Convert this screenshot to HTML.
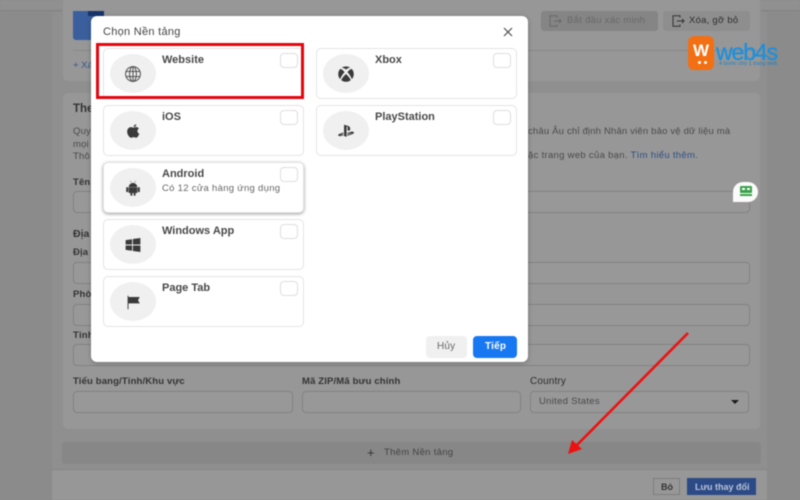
<!DOCTYPE html>
<html lang="vi"><head><meta charset="utf-8"><title>Chọn Nền tảng</title>
<style>
html,body{margin:0;padding:0;width:800px;height:500px;overflow:hidden;background:#8b8b8b}
body{font-family:"Liberation Sans",Arial,sans-serif;position:relative}
#wrap{position:absolute;left:0;top:0;width:800px;height:500px;filter:blur(.45px)}
.a{position:absolute;box-sizing:border-box}
.t{position:absolute;white-space:nowrap;line-height:14px}
.card{background:#979797;border:1px solid #8f8f8f;border-radius:6px}
.in{background:#989898;border:1px solid #828282;border-radius:4px;height:22px}
.lb{font-weight:bold;font-size:9.5px;color:#333;letter-spacing:.15px}
.p{font-size:9.5px;color:#4a4a4a;letter-spacing:.18px}
.m{background:#fff;border:1px solid #e4e4e4;border-radius:5px;width:201px;height:51px}
.c{position:absolute;left:6px;top:5px;width:46px;height:39px;border-radius:50%;background:#f0f0f0}
.c svg{position:absolute;left:14px;top:10.5px;width:18px;height:18px}
.n{position:absolute;left:58px;top:3.5px;font-weight:bold;font-size:11px;color:#484848;line-height:14px;white-space:nowrap}
.s{position:absolute;left:58px;top:18.5px;font-size:9.5px;color:#666;letter-spacing:.3px;line-height:14px;white-space:nowrap}
.k{position:absolute;left:176px;top:4px;width:18px;height:15px;border:1px solid #dedede;border-radius:4px;box-sizing:border-box}
</style></head><body><div id="wrap">
<div class="a" style="left:0;top:0;width:800px;height:11px;background:#909090;border-bottom:1px solid #838383"></div>
<div class="a" style="left:52px;top:12px;width:715px;height:458px;background:#8f8f8f"></div>
<div class="a" style="left:52px;top:469px;width:715px;height:31px;background:#979797;border-top:1px solid #858585"></div>

<div class="a card" style="left:62px;top:-10px;width:699px;height:92px"></div>
<div class="a" style="left:73px;top:11px;width:30px;height:29px;background:#3a5f9c;border-radius:0 0 0 3px"></div>
<div class="a" style="left:88px;top:11px;width:16px;height:5px;background:#17336a"></div>
<div class="a" style="left:73px;top:50px;width:688px;height:1px;background:#878787"></div>
<div class="t" style="left:73px;top:59px;font-size:9.5px;color:#34558f">+ Xá</div>
<div class="a" style="left:541px;top:11px;width:117px;height:20px;background:#858585;border-radius:3px"></div>
<div class="t" style="left:567px;top:13.500px;font-size:9.5px;color:#686868;letter-spacing:.3px">Bắt đầu xác minh</div>
<svg class="a" style="left:549px;top:15px" width="13" height="12" viewBox="0 0 13 12" fill="none" stroke="#686868"><path d="M8 2.500V.7H1V11.300H8V9.500M5 6H12M10 4L12 6L10 8"/></svg>
<div class="a" style="left:663px;top:11px;width:87px;height:20px;background:#8e8e8e;border-radius:3px"></div>
<div class="t" style="left:689px;top:13.500px;font-size:9.5px;color:#2e2e2e;letter-spacing:.25px">Xóa, gỡ bỏ</div>
<svg class="a" style="left:672px;top:15px" width="13" height="12" viewBox="0 0 13 12" fill="none" stroke="#333"><path d="M8 2.500V.7H1V11.300H8V9.500M5 6H12M10 4L12 6L10 8"/></svg>

<div class="a card" style="left:62px;top:92px;width:699px;height:338px"></div>
<div class="t" style="left:73px;top:102px;font-size:11.5px;font-weight:bold;color:#333">The</div>
<div class="t p" style="left:73px;top:125px">Quy</div>
<div class="t p" style="left:73px;top:138px">mọi</div>
<div class="t p" style="left:73px;top:150px">Thô</div>
<div class="t p" style="left:528px;top:125px">châu Âu chỉ định Nhân viên bảo vệ dữ liệu mà</div>
<div class="t p" style="left:528px;top:149px;letter-spacing:.3px">ặc trang web của bạn. <span style="color:#2d5187">Tìm hiểu thêm.</span></div>
<div class="t lb" style="left:73px;top:176px">Tên</div>
<div class="a in" style="left:73px;top:191px;width:677px"></div>
<div class="t" style="left:73px;top:227px;font-size:10.5px;font-weight:bold;color:#333">Địa</div>
<div class="t lb" style="left:73px;top:246px">Địa</div>
<div class="a in" style="left:73px;top:262px;width:677px"></div>
<div class="t lb" style="left:73px;top:288px">Phò</div>
<div class="a in" style="left:73px;top:304px;width:677px"></div>
<div class="t lb" style="left:73px;top:329px">Tỉnh</div>
<div class="a in" style="left:73px;top:344px;width:677px"></div>
<div class="t lb" style="left:73px;top:375px">Tiểu bang/Tỉnh/Khu vực</div>
<div class="a in" style="left:73px;top:391px;width:220px"></div>
<div class="t lb" style="left:302px;top:375px">Mã ZIP/Mã bưu chính</div>
<div class="a in" style="left:302px;top:391px;width:219px"></div>
<div class="t lb" style="left:530px;top:375px;font-weight:normal;color:#2c2c2c;font-size:10px">Country</div>
<div class="a in" style="left:530px;top:391px;width:219px"></div>
<div class="t p" style="left:539px;top:395px;color:#484848;letter-spacing:.3px">United States</div>
<div class="a" style="left:731px;top:400px;width:0;height:0;border:4px solid transparent;border-top:4px solid #1c1c1c"></div>

<div class="a" style="left:62px;top:442px;width:699px;height:22px;background:#878787;border-radius:3px"></div>
<div class="t" style="left:367px;top:446px;font-size:13px;color:#333">+</div>
<div class="t" style="left:384px;top:445.500px;font-size:9.5px;color:#444;letter-spacing:.3px">Thêm Nền tảng</div>

<div class="a" style="left:653px;top:478px;width:27px;height:17px;border:1px solid #7e7e7e;background:#979797"></div>
<div class="t" style="left:661px;top:479.500px;font-size:9px;font-weight:bold;color:#333">Bỏ</div>
<div class="a" style="left:687px;top:478px;width:69px;height:17px;background:#2b4a86"></div>
<div class="t" style="left:695px;top:479.500px;font-size:9px;font-weight:bold;color:#b9c3d6">Lưu thay đổi</div>

<!-- logo -->
<div class="a" style="left:688px;top:36px;width:26px;height:34px;background:#f26f13;border-radius:6px"></div>
<div class="t" style="left:693px;top:42px;font-size:17px;font-weight:bold;color:#fff;line-height:17px">W</div>
<div class="a" style="left:698px;top:61px;width:3px;height:3px;border-radius:50%;background:#fff"></div>
<div class="a" style="left:704px;top:61px;width:3px;height:3px;border-radius:50%;background:#fff"></div>
<div class="t" style="left:716px;top:40px;font-size:23px;color:#1b90de;letter-spacing:-1.1px;line-height:24px;-webkit-text-stroke:.3px #1b90de">web4s</div>
<div class="t" style="left:719px;top:59.500px;font-size:5.500px;color:#1f7fc0;line-height:8px">4 bước cho 1 trang web</div>

<!-- chat bubble -->
<div class="a" style="left:733px;top:182px;width:25px;height:20px;background:#fafafa;border-radius:10px 10px 10px 0"></div>
<div class="a" style="left:740px;top:186px;width:12px;height:7px;background:#3aa14a;border-radius:1px"></div>
<div class="a" style="left:742px;top:188px;width:3px;height:2px;background:#fff"></div>
<div class="a" style="left:747px;top:188px;width:3px;height:2px;background:#fff"></div>
<div class="a" style="left:740px;top:194px;width:12px;height:2px;background:#3aa14a"></div>

<!-- arrow -->
<svg class="a" style="left:560px;top:325px" width="135" height="135" viewBox="0 0 135 135"><path d="M128 8L14 123" stroke="#ee1111" stroke-width="2.600" fill="none"/><path d="M8 129L12 115L22 124Z" fill="#ee1111"/></svg>

<!-- modal -->
<div class="a" style="left:91px;top:16px;width:437px;height:346px;background:#fff;border-radius:6px;box-shadow:0 1px 5px rgba(0,0,0,.25)"></div>
<div class="t" style="left:103px;top:25px;font-size:11px;color:#444;letter-spacing:.28px">Chọn Nền tảng</div>
<svg class="a" style="left:503px;top:27px" width="10" height="10" viewBox="0 0 10 10"><path d="M1 1L9 9M9 1L1 9" stroke="#444" stroke-width="1.1"/></svg>

<div class="a m" style="left:103px;top:48px"><div class="c"><svg viewBox="0 0 20 20" fill="none" stroke="#555" stroke-width="1.2"><circle cx="10" cy="10" r="8.2"/><ellipse cx="10" cy="10" rx="3.8" ry="8.2"/><path d="M10 2V18M2.200 7.200H17.800M2.200 12.800H17.800"/></svg></div><div class="n">Website</div><div class="k"></div></div>

<div class="a m" style="left:103px;top:105px"><div class="c"><svg viewBox="0 0 20 20" fill="#3a3a3a"><path d="M13.600 2.600c.1 1.500-1.300 3-2.900 2.900-.1-1.500 1.400-3 2.900-2.900zM10.600 6.300c.7 0 1.500-.7 2.800-.7 1.200 0 2.400.6 3.100 1.700-2.400 1.400-2 4.800.5 5.800-.6 1.700-2 4.400-3.500 4.400-1 0-1.400-.7-2.700-.7s-1.800.7-2.700.7C6.100 17.500 3.500 13.900 3.500 10.700c0-3 1.900-5 4.200-5 1.200 0 2.100.6 2.900.6z"/></svg></div><div class="n">iOS</div><div class="k"></div></div>

<div class="a m" style="left:103px;top:162px;box-shadow:0 1px 3px rgba(0,0,0,.4)"><div class="c"><svg viewBox="0 0 20 20" fill="#3a3a3a"><path d="M5.500 8.200A4.600 4.600 0 0 1 14.500 8.200V8.600H5.500ZM5.500 9.400H14.500V15.400H12.600V18.300H11V15.400H9V18.300H7.400V15.400H5.500ZM2.700 9.400H4.500V14.300H2.700ZM15.500 9.400H17.300V14.300H15.500ZM7 2L8 3.800M13 2L12 3.800" stroke="#3a3a3a" stroke-width=".5"/></svg></div><div class="n">Android</div><div class="s">Có 12 cửa hàng ứng dụng</div><div class="k"></div></div>

<div class="a m" style="left:103px;top:219px"><div class="c"><svg viewBox="0 0 20 20" fill="#3a3a3a"><path d="M1.800 4.600L8.900 3.600V9.500H1.800ZM9.900 3.400L18.200 2.200V9.500H9.900ZM1.800 10.500H8.900V16.400L1.800 15.400ZM9.900 10.500H18.200V17.800L9.900 16.600Z"/></svg></div><div class="n">Windows App</div><div class="k"></div></div>

<div class="a m" style="left:103px;top:276px"><div class="c"><svg viewBox="0 0 20 20" fill="#3a3a3a"><path d="M4 3H5V18H4Z"/><path d="M5 4.500H17.500L15.600 8L17.500 11.500H5Z"/></svg></div><div class="n">Page Tab</div><div class="k"></div></div>

<div class="a m" style="left:316px;top:48px"><div class="c"><svg viewBox="0 0 20 20" fill="#3a3a3a"><path d="M10 1.500A8.500 8.500 0 0 1 15 3.100C13.500 2.700 11.600 3.700 10 5 8.400 3.700 6.500 2.700 5 3.100A8.500 8.500 0 0 1 10 1.500ZM3.500 4.500C5 4.300 6.800 6 8.400 7.900 6 10.500 4.300 13.500 3.500 15.700A8.500 8.500 0 0 1 3.500 4.500ZM16.500 4.500A8.500 8.500 0 0 1 16.500 15.700C15.700 13.500 14 10.500 11.600 7.900 13.200 6 15 4.300 16.500 4.500ZM10 10C12.300 12 14.500 14.700 15.300 16.800A8.500 8.500 0 0 1 4.700 16.800C5.500 14.700 7.700 12 10 10Z"/></svg></div><div class="n">Xbox</div><div class="k"></div></div>

<div class="a m" style="left:316px;top:105px"><div class="c"><svg viewBox="0 0 20 20" fill="#3a3a3a"><path d="M7.800 3L11.800 4.200C14 4.900 14.700 6 14.700 7.700 14.700 9.400 13.400 10.200 11.800 9.500V5.800C11.800 5.300 11.600 5.100 11.200 5 10.900 4.900 10.700 5.100 10.700 5.600V16.500L7.800 15.600ZM7 11.600L3.400 12.900C1.800 13.500 1 14.200 1.300 14.900 1.700 15.600 3 15.800 4.500 15.500L7 14.700V13.500L4.900 14.200C4.200 14.400 3.800 14.200 4.300 13.900L7 12.900ZM11.500 12.200L15.300 10.900C16.900 10.500 18.600 10.900 18.800 11.700 19 12.500 18.200 13 16.900 13.500L11.500 15.400V14.200L15.400 12.800C16 12.600 15.900 12.200 15.200 12.300L11.500 13.500Z"/></svg></div><div class="n">PlayStation</div><div class="k"></div></div>

<div class="a" style="left:96px;top:43px;width:208px;height:56px;border:3px solid #e5050d"></div>

<div class="a" style="left:426px;top:336px;width:41px;height:22px;background:#f0f0f0;border-radius:4px"></div>
<div class="t" style="left:437px;top:340px;font-size:10px;color:#666;letter-spacing:.2px">Hủy</div>
<div class="a" style="left:473px;top:336px;width:44px;height:22px;background:#1778f2;border-radius:4px"></div>
<div class="t" style="left:485px;top:340px;font-size:10px;font-weight:bold;color:#fff;letter-spacing:.2px">Tiếp</div>
</div></body></html>
